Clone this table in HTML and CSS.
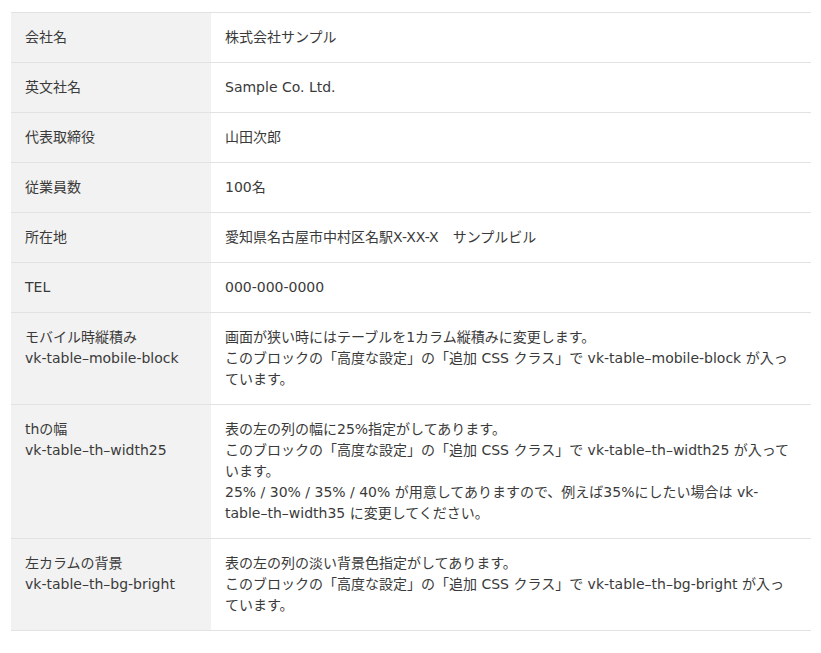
FILE: index.html
```html
<!DOCTYPE html>
<html lang="ja">
<head>
<meta charset="utf-8">
<link rel="stylesheet" href="styles.css">
</head>
<body>
<div class="wrap">
<table class="info">
<tbody>
<tr><th>会社名</th><td>株式会社サンプル</td></tr>
<tr><th>英文社名</th><td>Sample Co. Ltd.</td></tr>
<tr><th>代表取締役</th><td>山田次郎</td></tr>
<tr><th>従業員数</th><td>100名</td></tr>
<tr><th>所在地</th><td>愛知県名古屋市中村区名駅X-XX-X　サンプルビル</td></tr>
<tr><th>TEL</th><td>000-000-0000</td></tr>
<tr><th>モバイル時縦積み<br>vk-table–mobile-block</th><td>画面が狭い時にはテーブルを1カラム縦積みに変更します。<br>このブロックの「高度な設定」の「追加 CSS クラス」で vk-table–mobile-block が入っています。</td></tr>
<tr><th>thの幅<br>vk-table–th–width25</th><td>表の左の列の幅に25%指定がしてあります。<br>このブロックの「高度な設定」の「追加 CSS クラス」で vk-table–th–width25 が入っています。<br>25% / 30% / 35% / 40% が用意してありますので、例えば35%にしたい場合は vk-table–th–width35 に変更してください。</td></tr>
<tr><th>左カラムの背景<br>vk-table–th–bg-bright</th><td>表の左の列の淡い背景色指定がしてあります。<br>このブロックの「高度な設定」の「追加 CSS クラス」で vk-table–th–bg-bright が入っています。</td></tr>
</tbody>
</table>
</div>
</body>
</html>
```

FILE: styles.css
```css
html, body {
  margin: 0;
  padding: 0;
  background: #fff;
}
.wrap {
  padding: 12px 10px 0 11px;
}
.info {
  width: 800px;
  border-collapse: collapse;
  border-top: 1px solid #e2e2e2;
  font-family: "DejaVu Sans", "Noto Sans CJK JP", sans-serif;
  font-size: 14px;
  line-height: 21px;
  color: #3a3a3a;
}
.info th,
.info td {
  text-align: left;
  vertical-align: top;
  font-weight: normal;
  padding: 14px 14px;
  border-bottom: 1px solid #e2e2e2;
}
.info th {
  width: 25%;
  box-sizing: border-box;
  background: #f2f2f2;
}
```
